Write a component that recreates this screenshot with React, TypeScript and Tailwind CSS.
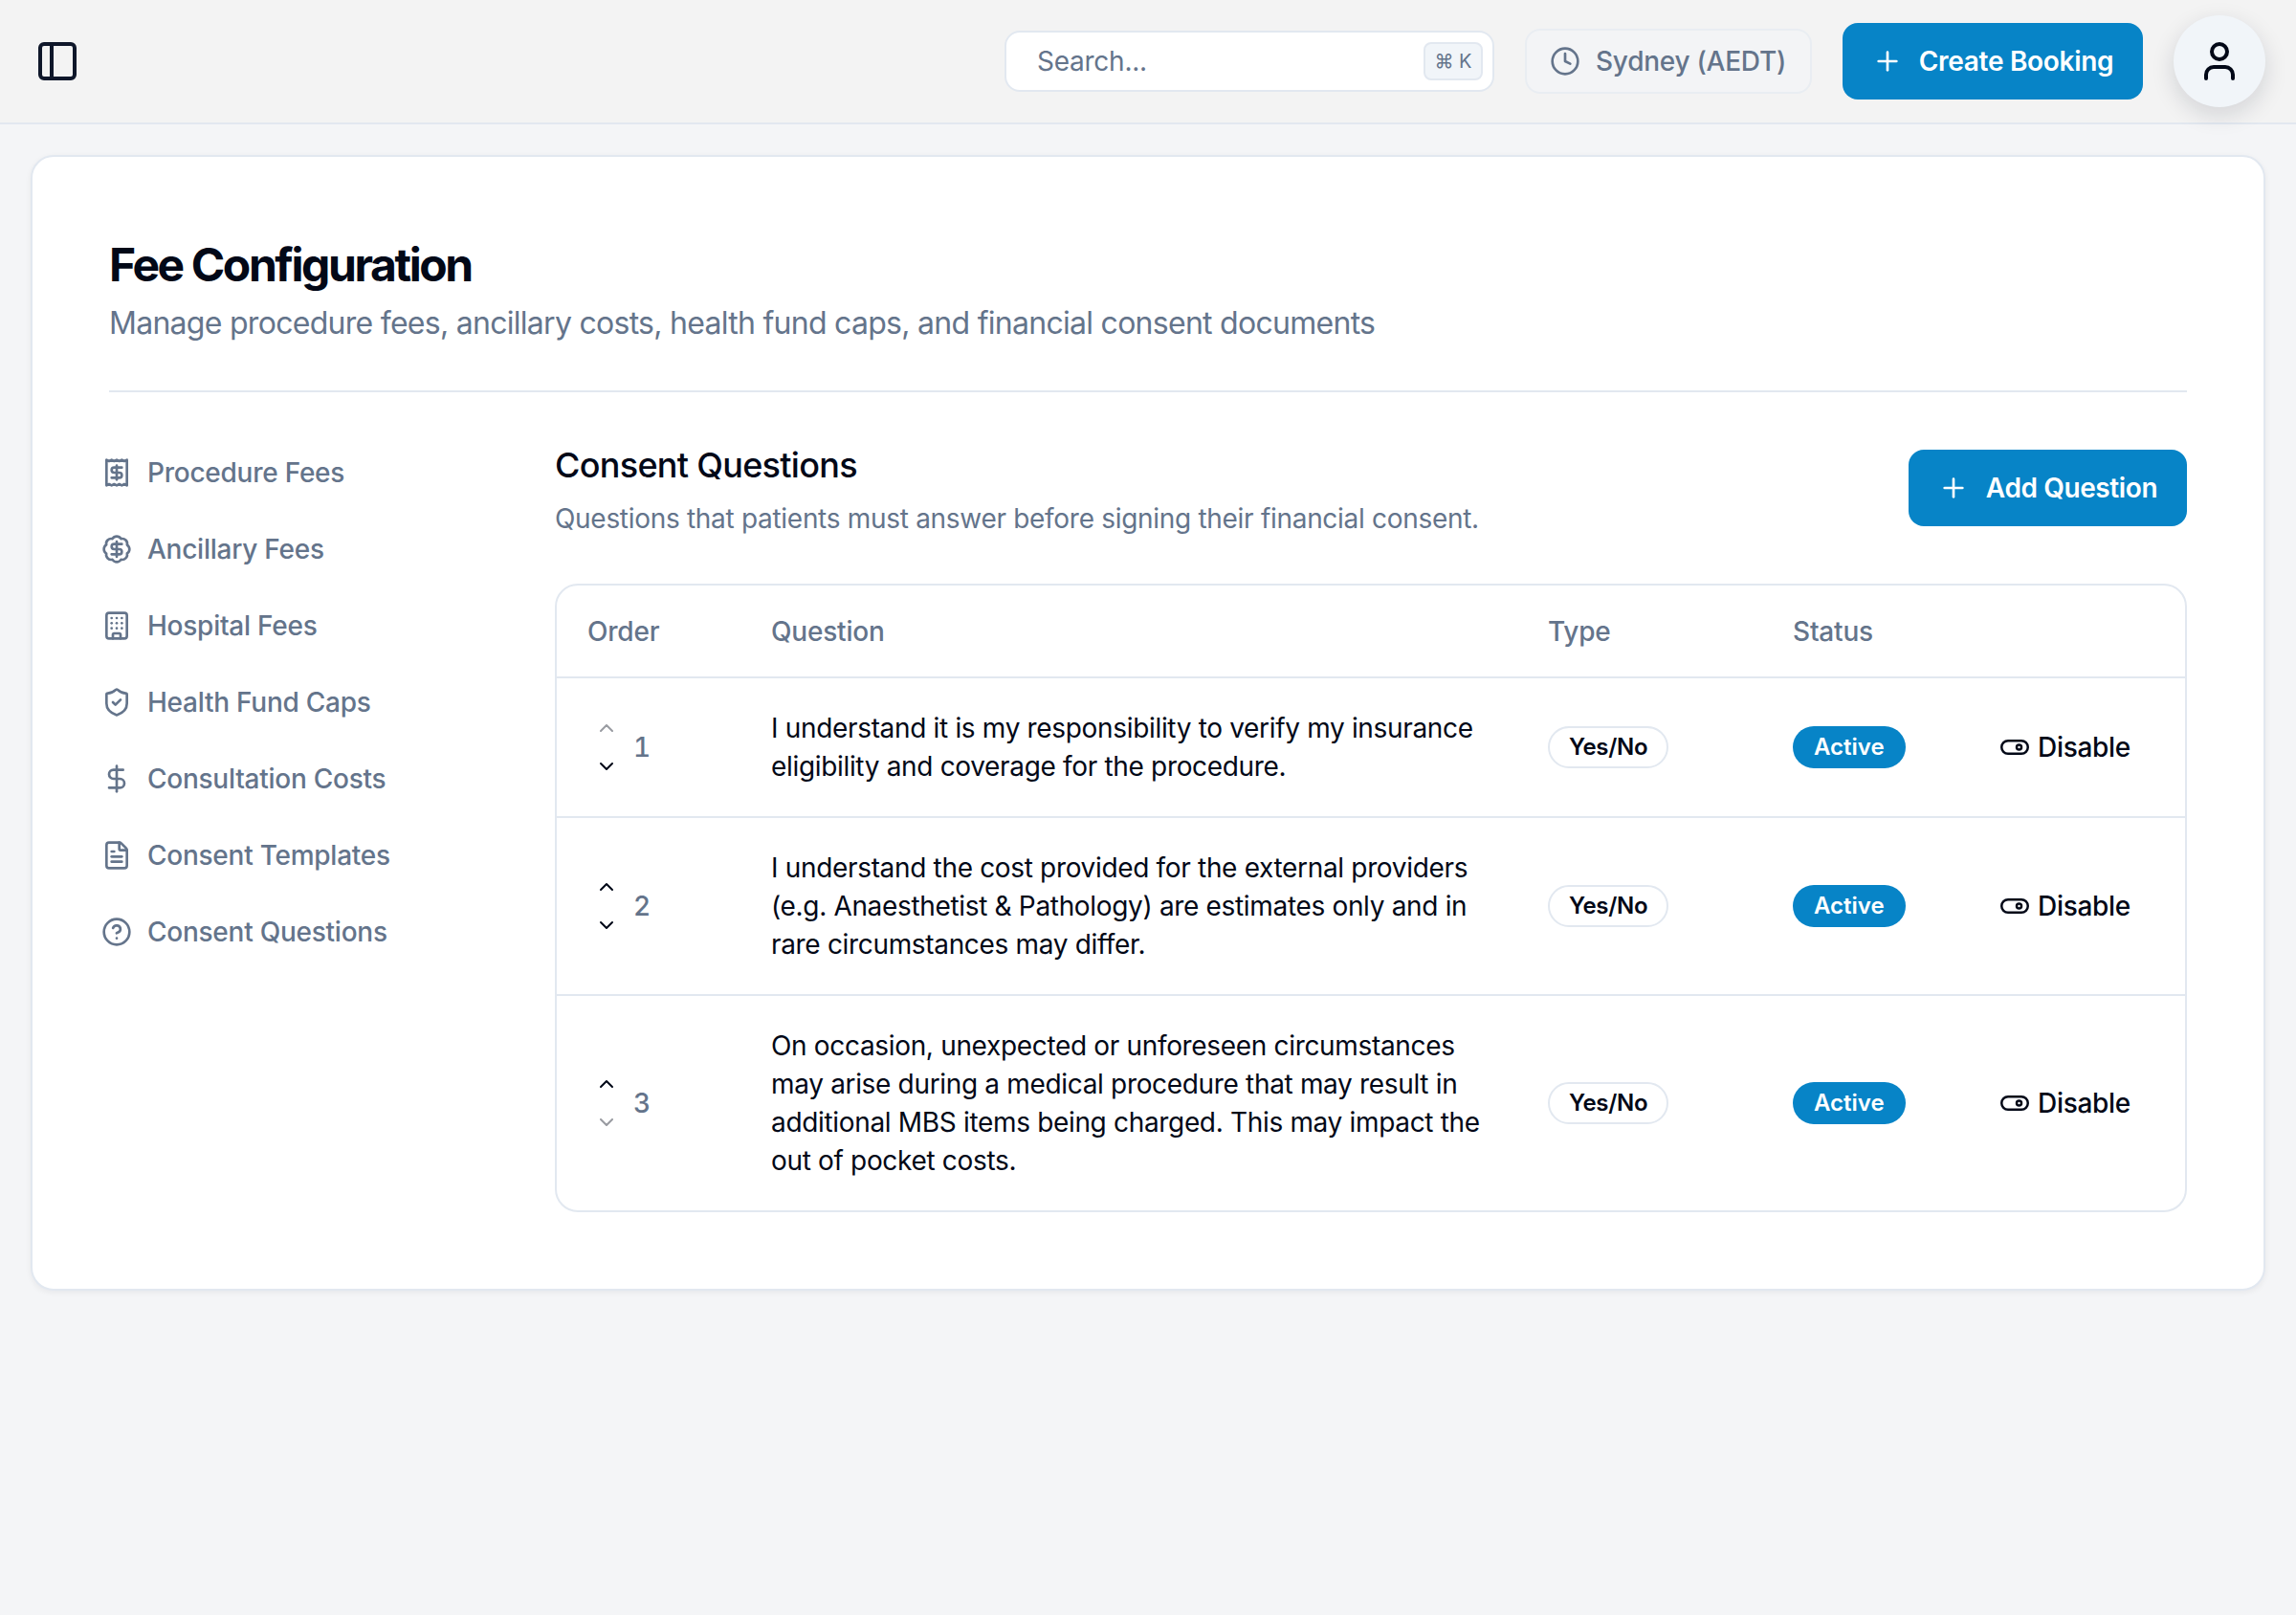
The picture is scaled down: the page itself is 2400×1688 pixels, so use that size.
import {
  BadgeDollarSign,
  Building,
  ChevronDown,
  ChevronUp,
  CircleHelp,
  Clock,
  DollarSign,
  FileText,
  PanelLeft,
  Plus,
  Receipt,
  ShieldCheck,
  User,
} from 'lucide-react';

const NAV_ITEMS = [
  { label: 'Procedure Fees', icon: Receipt },
  { label: 'Ancillary Fees', icon: BadgeDollarSign },
  { label: 'Hospital Fees', icon: Building },
  { label: 'Health Fund Caps', icon: ShieldCheck },
  { label: 'Consultation Costs', icon: DollarSign },
  { label: 'Consent Templates', icon: FileText },
  { label: 'Consent Questions', icon: CircleHelp },
];

const QUESTIONS = [
  {
    order: 1,
    text: 'I understand it is my responsibility to verify my insurance eligibility and coverage for the procedure.',
  },
  {
    order: 2,
    text: 'I understand the cost provided for the external providers (e.g. Anaesthetist & Pathology) are estimates only and in rare circumstances may differ.',
  },
  {
    order: 3,
    text: 'On occasion, unexpected or unforeseen circumstances may arise during a medical procedure that may result in additional MBS items being charged. This may impact the out of pocket costs.',
  },
];

// The toggle in the reference is wider and flatter than lucide's ToggleRight.
function DisableToggle() {
  return (
    <svg width="30" height="16" viewBox="0 0 30 16" fill="none" stroke="currentColor" strokeWidth="2.5">
      <rect x="1.25" y="1.25" width="27.5" height="13.5" rx="6.75" />
      <circle cx="19.5" cy="8" r="2.5" />
    </svg>
  );
}

function Header() {
  return (
    <header className="flex h-[130px] items-center justify-between border-b-2 border-[#e2e8f0] bg-[#f3f3f3] pl-[36px] pr-[32px]">
      <PanelLeft className="size-[48px] text-[#0f172a]" strokeWidth={2} />
      <div className="flex items-center">
        <div className="flex h-[64px] w-[512px] items-center justify-between rounded-[16px] border-2 border-[#e2e8f0] bg-white pl-[32px] pr-[10px]">
          <span className="text-[28px] tracking-[-0.25px] text-[#64748b]">Search...</span>
          <kbd className="flex h-[40px] w-[62px] items-center justify-center rounded-[8px] border-2 border-[#e2e8f0] bg-[#f1f5f9] font-['Inter',sans-serif] text-[20px] text-[#64748b]">
            ⌘ K
          </kbd>
        </div>
        <div className="ml-[32px] flex h-[68px] w-[300px] items-center gap-[16px] rounded-[16px] border-2 border-[#e9edf2] bg-[#f3f4f6] pl-[24px]">
          <Clock className="size-[32px] text-[#64748b]" />
          <span className="text-[28px] font-medium tracking-[-0.25px] text-[#64748b]">Sydney (AEDT)</span>
        </div>
        <button className="ml-[32px] flex h-[80px] w-[314px] items-center justify-center gap-[17px] rounded-[16px] bg-[#0784c7] text-[28px] font-semibold tracking-[-0.3px] text-white">
          <Plus className="size-[32px]" />
          Create Booking
        </button>
        <div className="ml-[32px] flex size-[96px] items-center justify-center rounded-full bg-[#f1f5f9] shadow-[0_8px_24px_rgba(15,23,42,0.14)]">
          <User className="size-[48px] text-[#020817]" />
        </div>
      </div>
    </header>
  );
}

function SideNav() {
  return (
    <nav className="-ml-[8px] mt-[4px] flex w-[474px] shrink-0 flex-col gap-[16px]">
      {NAV_ITEMS.map(({ label, icon: Icon }) => (
        <div key={label} className="flex h-[64px] items-center gap-[16px] text-[#64748b]">
          <Icon className="size-[32px] shrink-0" />
          <span className="text-[28px] font-medium tracking-[-0.25px]">{label}</span>
        </div>
      ))}
    </nav>
  );
}

function QuestionRow({ order, text }: { order: number; text: string }) {
  return (
    <tr className="border-t-2 border-[#e2e8f0]">
      <td className="py-[32px] pl-[32px] align-middle">
        <div className="flex items-center gap-[8px]">
          <div className="flex w-[40px] flex-col items-center gap-[16px]">
            <ChevronUp className={`size-[24px] text-[#020817] ${order === 1 ? 'opacity-40' : ''}`} />
            <ChevronDown className={`size-[24px] text-[#020817] ${order === 3 ? 'opacity-40' : ''}`} />
          </div>
          <span className="text-[28px] font-medium tabular-nums text-[#64748b]">{order}</span>
        </div>
      </td>
      <td className="py-[32px] pl-[32px] pr-[34px] align-middle text-[28px] leading-[40px] tracking-[-0.33px] text-[#020817]">
        {text}
      </td>
      <td className="pl-[32px] align-middle">
        <span className="inline-flex h-[44px] items-center rounded-full border-2 border-[#e2e8f0] px-[20px] text-[24px] font-semibold tracking-[-0.3px] text-[#020817]">
          Yes/No
        </span>
      </td>
      <td className="pl-[32px] align-middle">
        <span className="inline-flex h-[44px] items-center rounded-full bg-[#0784c7] px-[22px] text-[24px] font-semibold text-white">
          Active
        </span>
      </td>
      <td className="align-middle">
        <div className="flex items-center gap-[9px] pl-[29px] text-[28px] font-medium tracking-[-0.3px] text-[#020817]">
          <DisableToggle />
          Disable
        </div>
      </td>
    </tr>
  );
}

function QuestionsTable() {
  return (
    <div className="overflow-hidden rounded-[24px] border-2 border-[#e2e8f0]">
      <table className="w-full table-fixed border-collapse">
        <colgroup>
          <col className="w-[192px]" />
          <col className="w-[812px]" />
          <col className="w-[256px]" />
          <col className="w-[220px]" />
          <col />
        </colgroup>
        <thead>
          <tr className="h-[96px] text-left text-[28px] font-medium tracking-[-0.2px] text-[#64748b]">
            <th className="pl-[32px] font-medium">Order</th>
            <th className="pl-[32px] font-medium">Question</th>
            <th className="pl-[32px] font-medium">Type</th>
            <th className="pl-[32px] font-medium">Status</th>
            <th />
          </tr>
        </thead>
        <tbody>
          {QUESTIONS.map((q) => (
            <QuestionRow key={q.order} order={q.order} text={q.text} />
          ))}
        </tbody>
      </table>
    </div>
  );
}

export default function App() {
  return (
    <div className="min-h-[1688px] bg-[#f4f5f7] font-['Inter',sans-serif]">
      <Header />
      <main className="px-[32px] pt-[32px]">
        <div className="rounded-[24px] border-2 border-[#e2e8f0] bg-white p-[80px] shadow-[0_2px_6px_rgba(15,23,42,0.06)]">
          <h1 className="text-[48px] font-bold leading-[66px] tracking-[-2.4px] text-[#020817]">Fee Configuration</h1>
          <p className="mt-[4px] text-[32px] leading-[48px] tracking-[-0.72px] text-[#64748b]">
            Manage procedure fees, ancillary costs, health fund caps, and financial consent documents
          </p>
          <div className="mb-[48px] mt-[46px] border-t-2 border-[#e2e8f0]" />
          <div className="flex">
            <SideNav />
            <section className="min-w-0 flex-1">
              <div className="mb-[48px] flex items-center justify-between">
                <div>
                  <h2 className="text-[36px] font-medium leading-[56px] tracking-[-0.7px] text-[#020817]">
                    Consent Questions
                  </h2>
                  <p className="mt-[8px] text-[28px] leading-[40px] tracking-[-0.3px] text-[#64748b]">
                    Questions that patients must answer before signing their financial consent.
                  </p>
                </div>
                <button className="flex h-[80px] w-[291px] items-center justify-center gap-[18px] rounded-[16px] bg-[#0784c7] text-[28px] font-semibold tracking-[-0.4px] text-white">
                  <Plus className="size-[32px]" />
                  Add Question
                </button>
              </div>
              <QuestionsTable />
            </section>
          </div>
        </div>
      </main>
    </div>
  );
}
